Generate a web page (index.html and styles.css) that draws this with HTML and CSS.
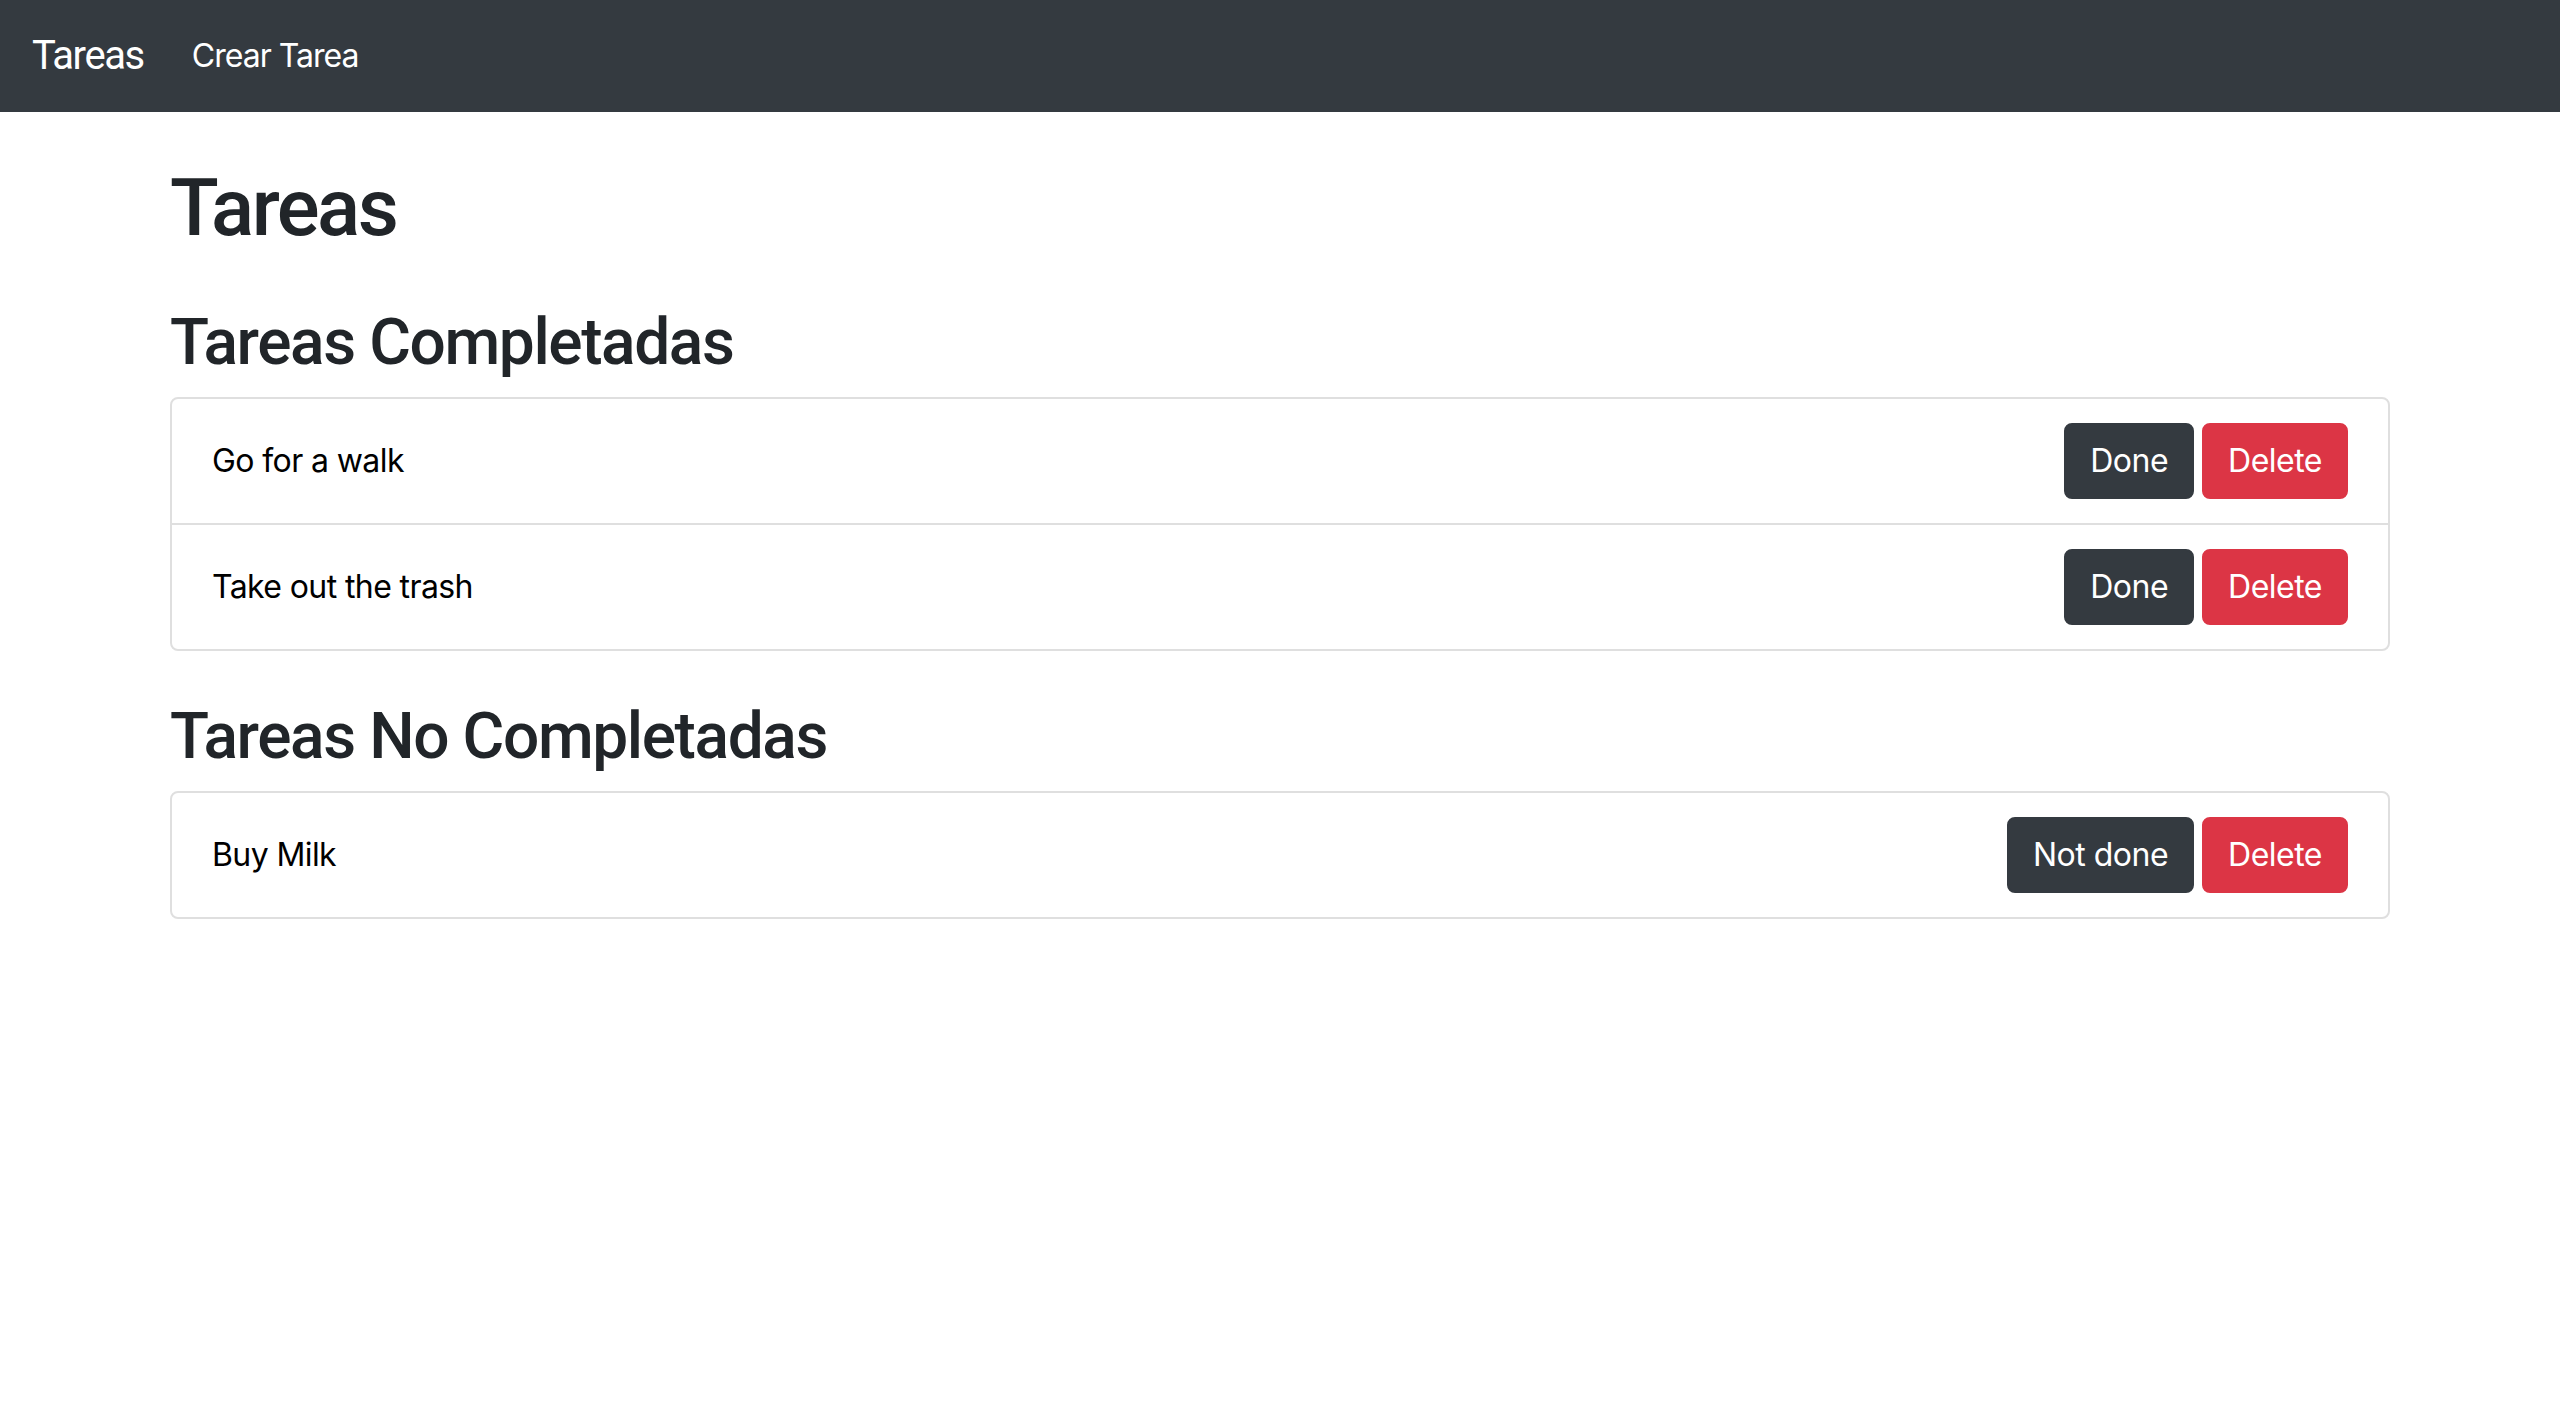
FILE: index.html
```html
<!DOCTYPE html>
<html lang="es">
<head>
<meta charset="utf-8">
<title>Tareas</title>
<link rel="stylesheet" href="styles.css">
</head>
<body>
<nav class="navbar">
  <a class="brand" href="#">Tareas</a>
  <a class="nav-link" href="#">Crear Tarea</a>
</nav>
<main class="container">
  <h1 class="title">Tareas</h1>
  <h2 class="section-title">Tareas Completadas</h2>
  <ul class="list">
    <li class="item">
      <span class="item-text">Go for a walk</span>
      <div class="actions">
        <button class="btn btn-dark">Done</button>
        <button class="btn btn-danger">Delete</button>
      </div>
    </li>
    <li class="item">
      <span class="item-text">Take out the trash</span>
      <div class="actions">
        <button class="btn btn-dark">Done</button>
        <button class="btn btn-danger">Delete</button>
      </div>
    </li>
  </ul>
  <h2 class="section-title">Tareas No Completadas</h2>
  <ul class="list">
    <li class="item">
      <span class="item-text">Buy Milk</span>
      <div class="actions">
        <button class="btn btn-dark">Not done</button>
        <button class="btn btn-danger">Delete</button>
      </div>
    </li>
  </ul>
</main>
</body>
</html>
```
FILE: styles.css
```css
* { box-sizing: border-box; }
html, body { margin: 0; padding: 0; }
body {
  font-family: Inter, "Liberation Sans", Arial, sans-serif;
  font-size: 32px;
  line-height: 1.5;
  color: #212529;
  background: #fff;
  letter-spacing: -0.6px;
}
.navbar {
  background: #343a40;
  height: 112px;
  padding: 16px 32px;
  display: flex;
  align-items: center;
}
.brand {
  font-family: Roboto, "Liberation Sans", Arial, sans-serif;
  color: #fff;
  text-decoration: none;
  font-size: 40px;
  line-height: 60px;
  padding: 10px 0;
  margin-right: 32px;
  letter-spacing: -1.4px;
}
.nav-link {
  color: #fff;
  text-decoration: none;
  font-size: 32px;
  line-height: 48px;
  padding: 8px 16px;
  letter-spacing: -1px;
}
.container {
  width: 2220px;
  margin: 0 auto;
  padding-top: 48px;
}
.title, .section-title {
  font-family: Roboto, "Liberation Sans", Arial, sans-serif;
  font-weight: 500;
  line-height: 1.2;
  color: #212529;
}
.title {
  font-size: 80px;
  margin: 0 0 49px;
  letter-spacing: -2.5px;
}
.section-title {
  font-size: 64px;
  margin: 0 0 15px;
  letter-spacing: -1.4px;
}
.list {
  list-style: none;
  margin: 0 0 48px;
  padding: 0;
  border: 2px solid #dfdfdf;
  border-radius: 8px;
}
.item {
  display: flex;
  justify-content: space-between;
  align-items: center;
  padding: 24px 40px;
}
.item + .item { border-top: 2px solid #dfdfdf; }
.item-text { color: #000; }
.actions { display: flex; gap: 8px; }
.btn {
  font-family: inherit;
  font-size: 32px;
  line-height: 48px;
  letter-spacing: -0.5px;
  padding: 12px 24px;
  border: 2px solid transparent;
  border-radius: 8px;
  color: #fff;
  cursor: pointer;
}
.btn-dark { background: #343a40; border-color: #343a40; }
.btn-danger { background: #dc3545; border-color: #dc3545; }
```
